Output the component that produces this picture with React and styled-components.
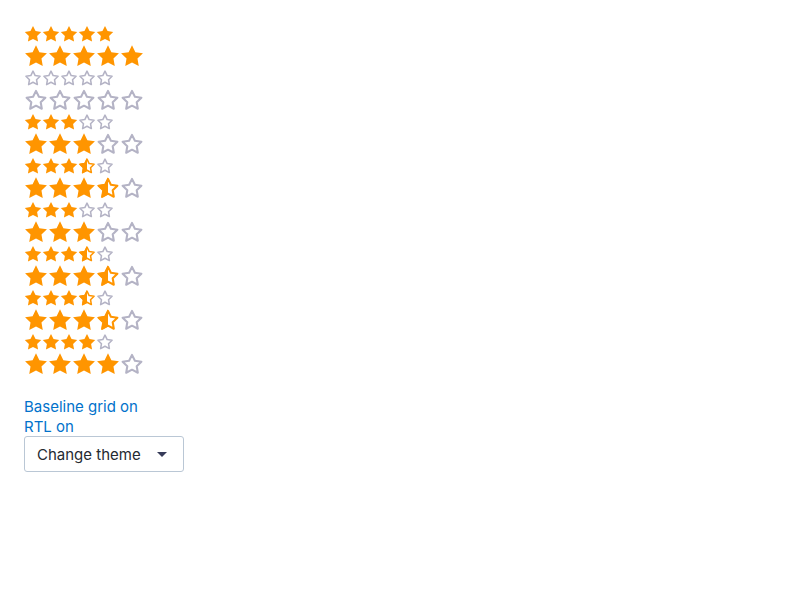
import styled, { createGlobalStyle } from "styled-components";

const GlobalStyle = createGlobalStyle`
  body {
    margin: 0;
    font-family: Inter, "Noto Sans", sans-serif;
    background: #fff;
  }
`;

const STAR =
  "M12 1.3L15.38 8.15 22.94 9.25 17.47 14.58 18.76 22.1 12 18.55 5.24 22.1 6.53 14.58 1.06 9.25 8.62 8.15Z";

const ORANGE = "#ff9500";
const GREY = "#b4b3c5";

const ratings = [
  [5, "small"],
  [5, "big"],
  [0, "small"],
  [0, "big"],
  [3, "small"],
  [3, "big"],
  [3.5, "small"],
  [3.5, "big"],
  [3, "small"],
  [3, "big"],
  [3.5, "small"],
  [3.5, "big"],
  [3.5, "small"],
  [3.5, "big"],
  [4, "small"],
  [4, "big"],
];

function Star({ kind, size }) {
  const outline = (color) => (
    <path
      d={STAR}
      fill="none"
      stroke={color}
      strokeWidth="2.4"
      strokeLinejoin="round"
      transform="translate(12 12.5) scale(0.86) translate(-12 -12.5)"
    />
  );
  return (
    <StarSvg viewBox="0 0 24 24" $size={size}>
      {kind === "full" && <path d={STAR} fill={ORANGE} />}
      {kind === "empty" && outline(GREY)}
      {kind === "half" && (
        <>
          <clipPath id={`half-${size}`}>
            <rect x="0" y="0" width="12" height="24" />
          </clipPath>
          <path d={STAR} fill={ORANGE} clipPath={`url(#half-${size})`} />
          {outline(ORANGE)}
        </>
      )}
    </StarSvg>
  );
}

function Rating({ value, size }) {
  const stars = [0, 1, 2, 3, 4].map((i) => {
    if (value >= i + 1) return "full";
    if (value > i) return "half";
    return "empty";
  });
  return (
    <StarRow>
      {stars.map((kind, i) => (
        <Star key={i} kind={kind} size={size === "big" ? 24 : 18} />
      ))}
    </StarRow>
  );
}

export default function App() {
  return (
    <>
      <GlobalStyle />
      <Page>
        <StarList>
          {ratings.map(([value, size], i) => (
            <Rating key={i} value={value} size={size} />
          ))}
        </StarList>
        <Toggle>Baseline grid on</Toggle>
        <Toggle>RTL on</Toggle>
        <ThemeButton>
          Change theme
          <Caret />
        </ThemeButton>
      </Page>
    </>
  );
}

const Page = styled.div`
  padding: 23px 24px 24px;
  display: flex;
  flex-direction: column;
  align-items: flex-start;
`;

const StarList = styled.div`
  display: flex;
  flex-direction: column;
  margin-bottom: 22px;
`;

const StarRow = styled.div`
  display: flex;
  align-items: center;
  height: 22px;
`;

const StarSvg = styled.svg`
  width: ${(p) => p.$size}px;
  height: ${(p) => p.$size}px;
  flex-shrink: 0;
`;

const Toggle = styled.button`
  border: none;
  background: none;
  padding: 0;
  font-family: inherit;
  font-size: 15px;
  line-height: 20px;
  color: #0172cb;
  cursor: pointer;
`;

const ThemeButton = styled.button`
  display: flex;
  align-items: center;
  justify-content: space-between;
  width: 160px;
  height: 36px;
  padding: 0 16px 0 12px;
  margin-top: -1px;
  border: 1px solid #bac7d5;
  border-radius: 3px;
  background: #fff;
  font-family: inherit;
  font-size: 15px;
  color: #252a31;
`;

const Caret = styled.span`
  width: 0;
  height: 0;
  border-left: 5px solid transparent;
  border-right: 5px solid transparent;
  border-top: 5px solid #363b59;
`;
